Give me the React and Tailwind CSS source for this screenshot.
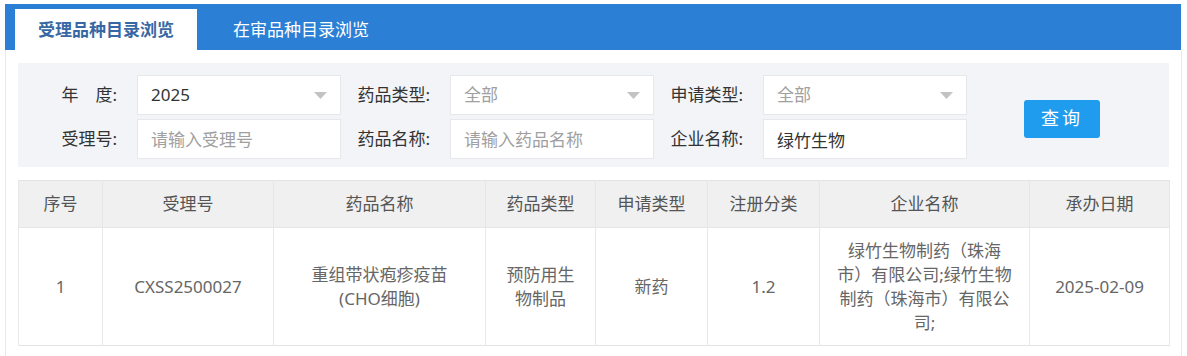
import React from 'react';

const font = { fontFamily: '"Noto Sans", "Noto Sans CJK SC", sans-serif' };

const Arrow = () => (
    <svg width="13" height="7" viewBox="0 0 13 7" className="shrink-0">
        <polygon points="0,0 13,0 6.5,7" fill="#c3c3c3" />
    </svg>
);

const Field = ({ label, children }) => (
    <div className="flex items-center">
        <label className="w-[109px] pr-[20px] text-right text-[17px] text-[#333]">{label}</label>
        {children}
    </div>
);

const SelectBox = ({ value, muted }) => (
    <div className="w-[204px] h-[40px] bg-white border border-[#e6e8ec] flex items-center justify-between pl-[13px] pr-[13px]">
        <span className={`text-[17px] ${muted ? 'text-[#a0a0a0]' : 'text-[#333]'}`}>{value}</span>
        <Arrow />
    </div>
);

const InputBox = ({ value, placeholder }) => (
    <input
        type="text"
        defaultValue={value}
        placeholder={placeholder}
        className="w-[204px] h-[40px] bg-white border border-[#e6e8ec] px-[13px] text-[17px] text-[#333] placeholder:text-[#a0a0a0] outline-none"
    />
);

const columns = [
    { title: '序号', w: 84 },
    { title: '受理号', w: 171 },
    { title: '药品名称', w: 212 },
    { title: '药品类型', w: 110 },
    { title: '申请类型', w: 112 },
    { title: '注册分类', w: 112 },
    { title: '企业名称', w: 210 },
    { title: '承办日期', w: 140 },
];

const Lines = ({ lines }) => (
    <div className="flex flex-col items-center">
        {lines.map((l) => (
            <span key={l} className="whitespace-nowrap">{l}</span>
        ))}
    </div>
);

export default function App() {
    const row = [
        '1',
        'CXSS2500027',
        <Lines lines={['重组带状疱疹疫苗', '(CHO细胞)']} />,
        <Lines lines={['预防用生', '物制品']} />,
        '新药',
        '1.2',
        <Lines lines={['绿竹生物制药（珠海', '市）有限公司;绿竹生物', '制药（珠海市）有限公', '司;']} />,
        '2025-02-09',
    ];

    return (
        <div className="min-h-screen bg-white pt-[4px] px-[5px]" style={font}>
            {/* tab bar */}
            <div className="h-[46px] w-[1176px] bg-[#2b80d6] flex items-end pl-[10px]">
                <div className="h-[41px] w-[182px] bg-white flex items-center justify-center text-[17px] font-bold text-[#3768a3]">
                    受理品种目录浏览
                </div>
                <div className="h-[41px] ml-[12px] px-[24px] flex items-center text-[17px] text-white">
                    在审品种目录浏览
                </div>
            </div>

            <div className="border-x border-[#e8e8e8] px-[12px] pt-[13px] pb-[11px]">
                {/* search panel */}
                <div className="bg-[#f2f4f7] pl-[10px] pt-[12px] pb-[8px] flex items-center">
                    <div className="flex flex-col gap-[4px]">
                        <div className="flex">
                            <Field label="年　度:"><SelectBox value="2025" /></Field>
                            <Field label="药品类型:"><SelectBox value="全部" muted /></Field>
                            <Field label="申请类型:"><SelectBox value="全部" muted /></Field>
                        </div>
                        <div className="flex">
                            <Field label="受理号:"><InputBox placeholder="请输入受理号" /></Field>
                            <Field label="药品名称:"><InputBox placeholder="请输入药品名称" /></Field>
                            <Field label="企业名称:"><InputBox value="绿竹生物" /></Field>
                        </div>
                    </div>
                    <button className="ml-[57px] mt-[3px] w-[76px] h-[38px] rounded-[3px] bg-[#1f9cee] text-white text-[18px] tracking-[3px]">
                        查询
                    </button>
                </div>

                {/* result table */}
                <table className="mt-[13px] w-[1151px] table-fixed border-collapse border border-[#e3e3e3] text-[17px]">
                    <colgroup>
                        {columns.map((c) => (
                            <col key={c.title} style={{ width: c.w }} />
                        ))}
                    </colgroup>
                    <thead>
                        <tr className="h-[47px] bg-[#f0f0f0]">
                            {columns.map((c) => (
                                <th key={c.title} className="font-normal text-[#555] border-x border-[#e6e6e6] border-b">
                                    {c.title}
                                </th>
                            ))}
                        </tr>
                    </thead>
                    <tbody>
                        <tr className="h-[118px]">
                            {row.map((cell, i) => (
                                <td key={i} className="text-center text-[#666] leading-[24px] border-x border-[#e8e8e8]">
                                    {cell}
                                </td>
                            ))}
                        </tr>
                    </tbody>
                </table>
            </div>
        </div>
    );
}
